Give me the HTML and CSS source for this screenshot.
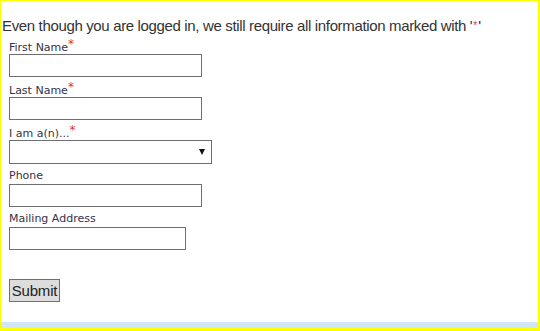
FILE: index.html
```html
<!DOCTYPE html>
<html lang="en">
<head>
  <meta charset="UTF-8">
  <title>Profile</title>
  <link rel="stylesheet" href="styles.css">
</head>
<body>
  <div class="page">
    <p class="intro">Even though you are logged in, we still require all information marked with '<span class="req">*</span>'</p>

    <form class="profile-form">
      <div class="field">
        <label>First Name<span class="star">*</span></label>
        <input type="text" class="wide">
      </div>
      <div class="field">
        <label>Last Name<span class="star">*</span></label>
        <input type="text" class="wide">
      </div>
      <div class="field">
        <label>I am a(n)...<span class="star">*</span></label>
        <div class="select-wrap">
          <select class="role"><option></option></select>
        </div>
      </div>
      <div class="field">
        <label>Phone</label>
        <input type="text" class="wide">
      </div>
      <div class="field">
        <label>Mailing Address</label>
        <input type="text" class="narrow">
      </div>
      <button type="button" class="submit">Submit</button>
    </form>

    <div class="footer-strip"></div>
  </div>
</body>
</html>
```

FILE: styles.css
```css
html, body {
  margin: 0;
  padding: 0;
  background: #fff;
}
.page {
  box-sizing: border-box;
  height: 331px;
  border-style: solid;
  border-color: #ffff00;
  border-width: 1px 2px 4px 1px;
  display: flex;
  flex-direction: column;
}
.intro {
  margin: 0;
  padding: 15px 0 0 1px;
  font-family: "Liberation Sans", Arial, sans-serif;
  font-size: 15px;
  letter-spacing: -0.35px;
  line-height: 20px;
  white-space: nowrap;
  color: #333;
}
.req {
  color: #d4393b;
  font-size: 10px;
  letter-spacing: 0;
  padding: 0 1px;
  vertical-align: 2px;
}
.profile-form {
  padding: 3px 0 0 8px;
}
.field label {
  display: block;
  height: 14px;
  font-family: "DejaVu Sans", Verdana, sans-serif;
  font-size: 11px;
  line-height: 14px;
  color: #35324a;
  margin-bottom: 1px;
}
.field {
  margin-bottom: 5px;
}
.star {
  color: #d4393b;
  font-size: 12px;
  vertical-align: 3px;
  line-height: 10px;
}
input {
  box-sizing: border-box;
  height: 23px;
  margin: 0;
  border: 1px solid #6f6f6f;
  background: #fff;
  display: block;
}
.wide {
  width: 193px;
}
.narrow {
  width: 177px;
}
.select-wrap {
  position: relative;
  width: 203px;
}
.role {
  appearance: none;
  -webkit-appearance: none;
  box-sizing: border-box;
  display: block;
  width: 203px;
  height: 24px;
  margin: 0;
  border: 1px solid #6f6f6f;
  border-radius: 0;
  background: #fff;
}
.select-wrap::after {
  content: "";
  position: absolute;
  right: 7px;
  top: 9px;
  border-left: 3.5px solid transparent;
  border-right: 3.5px solid transparent;
  border-top: 6px solid #111;
}
.submit {
  margin-top: 24px;
  box-sizing: border-box;
  width: 51px;
  height: 23px;
  padding: 0;
  font-family: "Liberation Sans", Arial, sans-serif;
  font-size: 15px;
  letter-spacing: -0.2px;
  color: #222;
  background: #dddddd;
  border: 1px solid #707070;
  border-radius: 0;
}
.footer-strip {
  margin-top: auto;
  height: 5px;
  background: #cfe6f8;
}
```
